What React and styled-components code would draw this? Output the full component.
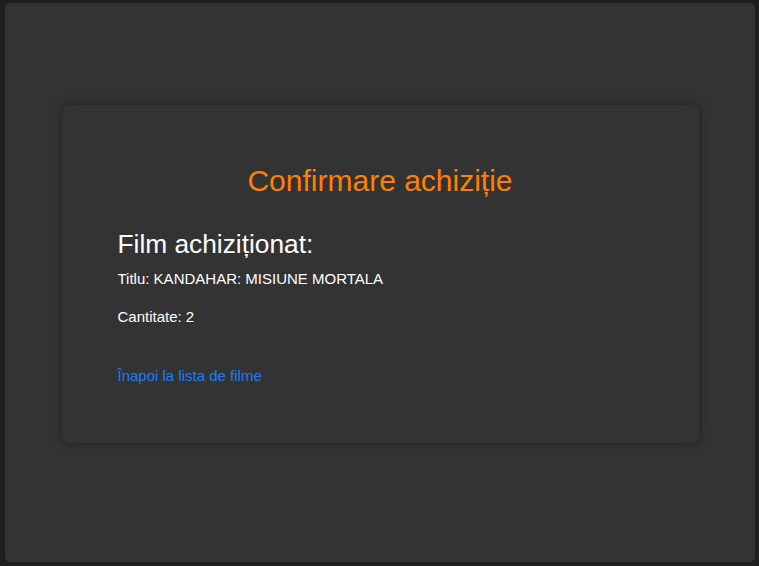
import React from 'react'
import styled, { createGlobalStyle } from 'styled-components'

const GlobalStyle = createGlobalStyle`
  html, body {
    margin: 0;
    padding: 0;
    background: #1f1f1f;
  }
  body {
    font-family: "Liberation Sans", Arial, sans-serif;
    color: #fff;
  }
`

const Page = styled.div`
  box-sizing: border-box;
  margin: 3px 4px 4px 5px;
  height: 559px;
  padding-top: 102px;
  background: #333;
  border-radius: 5px;
`

const Card = styled.div`
  box-sizing: border-box;
  width: 637px;
  margin: 0 auto;
  padding: 40px 56px;
  background: #333;
  border-radius: 8px;
  box-shadow: 0 0 12px rgba(0, 0, 0, 0.35);
`

const Title = styled.h1`
  margin: 19px 0 0;
  font-size: 30px;
  line-height: 34px;
  font-weight: 400;
  color: #ff8000;
  text-align: center;
`

const SubTitle = styled.h2`
  margin: 31px 0 0;
  font-size: 26.3px;
  line-height: 30px;
  font-weight: 400;
`

const Line = styled.p`
  margin: ${p => p.$gap}px 0 0;
  font-size: 15px;
  line-height: 22px;
`

const BackLink = styled.a`
  display: block;
  margin: 37px 0 16px;
  font-size: 15px;
  line-height: 22px;
  color: #1a7bff;
  text-decoration: none;
`

const App = () => {
  return (
    <>
      <GlobalStyle />
      <Page>
        <Card>
          <Title>Confirmare achiziție</Title>
          <SubTitle>Film achiziționat:</SubTitle>
          <Line $gap={9}>Titlu: KANDAHAR: MISIUNE MORTALA</Line>
          <Line $gap={16}>Cantitate: 2</Line>
          <BackLink href="#">Înapoi la lista de filme</BackLink>
        </Card>
      </Page>
    </>
  )
}
export default App
